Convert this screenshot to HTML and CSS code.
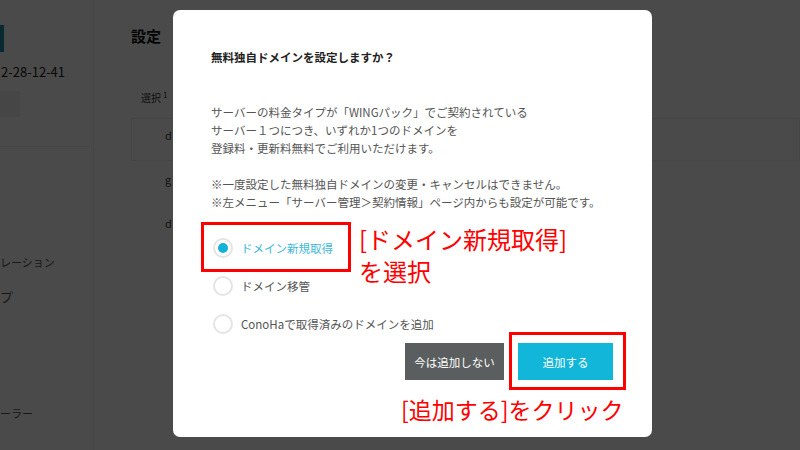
FILE: index.html
```html
<!DOCTYPE html>
<html lang="ja">
<head>
    <meta charset="UTF-8">
    <title>無料独自ドメイン設定</title>
    <link rel="stylesheet" href="styles.css">
</head>
<body>
    <div class="page">
        <aside class="sidebar">
            <div class="logo"></div>
            <div class="server-name">2-28-12-41</div>
            <div class="side-btn"></div>
            <nav class="side-menu">
                <div class="side-item item-migrate">レーション</div>
                <div class="side-item item-app">プ</div>
                <div class="side-item item-error">ーラー</div>
            </nav>
        </aside>

        <main class="content">
            <h2 class="content-title">設定</h2>
            <div class="table">
                <div class="table-head">選択<sup>1</sup></div>
                <div class="table-row selected">d</div>
                <div class="table-row">g</div>
                <div class="table-row">d</div>
            </div>
        </main>
    </div>

    <div class="overlay">
        <div class="modal">
            <h3 class="modal-title">無料独自ドメインを設定しますか？</h3>

            <p class="modal-text">
                サーバーの料金タイプが「WINGパック」でご契約されている<br>
                サーバー１つにつき、いずれか1つのドメインを<br>
                登録料・更新料無料でご利用いただけます。
            </p>
            <p class="modal-text">
                ※一度設定した無料独自ドメインの変更・キャンセルはできません。<br>
                ※左メニュー「サーバー管理＞契約情報」ページ内からも設定が可能です。
            </p>

            <div class="options">
                <label class="option checked"><span class="radio"></span>ドメイン新規取得</label>
                <label class="option"><span class="radio"></span>ドメイン移管</label>
                <label class="option"><span class="radio"></span>ConoHaで取得済みのドメインを追加</label>
            </div>

            <div class="modal-actions">
                <button class="btn btn-cancel">今は追加しない</button>
                <button class="btn btn-add">追加する</button>
            </div>

            <!-- annotations -->
            <div class="mark mark-option"></div>
            <div class="note note-option">[ドメイン新規取得]<br>を選択</div>
            <div class="mark mark-add"></div>
            <div class="note note-add">[追加する]をクリック</div>
        </div>
    </div>
</body>
</html>
```

FILE: styles.css
```css
* {
    margin: 0;
    padding: 0;
    box-sizing: border-box;
}

body {
    font-family: "Noto Sans CJK JP", sans-serif;
    background: #ffffff;
    color: #333;
    width: 800px;
    height: 450px;
    overflow: hidden;
    position: relative;
}

.page {
    display: flex;
    height: 450px;
}

/* sidebar (behind the dim layer) */
.sidebar {
    width: 94px;
    border-right: 1px solid #f0f0f0;
    display: flex;
    flex-direction: column;
}

.logo {
    width: 4px;
    height: 27px;
    margin-top: 25px;
    background: #1f8fa6;
}

.server-name {
    font-size: 13px;
    line-height: 18px;
    margin-top: 11px;
    padding-left: 1px;
    color: #222;
}

.side-btn {
    width: 20px;
    height: 26px;
    margin-top: 10px;
    background: #f2f2f2;
}

.side-menu {
    margin-top: 29px;
    border-top: 1px solid #f0f0f0;
    margin-right: 4px;
    flex: 1;
}

.side-item {
    font-size: 11px;
    line-height: 16px;
    color: #555;
}

.item-migrate {
    margin-top: 107px;
}

.item-app {
    margin-top: 19px;
    font-size: 13px;
}

.item-error {
    margin-top: 100px;
}

/* main content */
.content {
    flex: 1;
    padding: 26px 0 0 37px;
}

.content-title {
    font-size: 15px;
    line-height: 20px;
    font-weight: bold;
    color: #111;
}

.table {
    margin-top: 40px;
}

.table-head {
    font-size: 10px;
    line-height: 18px;
    padding-left: 10px;
    color: #333;
}

.table-head sup {
    font-size: 8px;
    margin-left: 2px;
}

.table-row {
    height: 44px;
    font-size: 11px;
    line-height: 36px;
    padding-left: 34px;
    color: #444;
}

.table-row.selected {
    margin-top: 11px;
    height: 43px;
    border: 1px solid #f2f2f2;
    line-height: 32px;
    padding-left: 33px;
}

/* dim layer + modal */
.overlay {
    position: absolute;
    inset: 0;
    background: rgba(0, 0, 0, 0.71);
    padding: 10px 0 0 173px;
}

.modal {
    position: relative;
    width: 479px;
    height: 427px;
    background: #fff;
    border-radius: 7px;
    padding: 38px 39px 0 38px;
}

.modal-title {
    font-size: 11.5px;
    line-height: 18px;
    font-weight: bold;
    color: #222;
    margin-bottom: 37px;
}

.modal-text {
    font-size: 11.5px;
    line-height: 18px;
    color: #555;
    margin-bottom: 18px;
}

.options {
    display: flex;
    flex-direction: column;
}

.option {
    display: flex;
    align-items: center;
    height: 38px;
    font-size: 11.5px;
    color: #555;
}

.radio {
    width: 20px;
    height: 20px;
    margin: 0 8px 0 2px;
    border: 2px solid #e4e4e4;
    border-radius: 50%;
    display: flex;
    align-items: center;
    justify-content: center;
}

.option.checked {
    color: #3db8da;
}

.option.checked .radio::after {
    content: "";
    width: 10px;
    height: 10px;
    border-radius: 50%;
    background: #15b2d8;
}

.modal-actions {
    display: flex;
    justify-content: flex-end;
    gap: 14px;
}

.btn {
    height: 37px;
    border: none;
    color: #fff;
    font-family: inherit;
    font-size: 11.5px;
}

.btn-cancel {
    width: 99px;
    background: #5a5e5e;
}

.btn-add {
    width: 95px;
    background: #12b6d8;
}

/* red annotations on top of the screenshot */
.mark {
    position: absolute;
    border: 3px solid #f00;
}

.mark-option {
    left: 28px;
    top: 212px;
    width: 150px;
    height: 50px;
}

.mark-add {
    left: 336px;
    top: 322px;
    width: 117px;
    height: 58px;
}

.note {
    position: absolute;
    color: #f00;
    white-space: nowrap;
}

.note-option {
    left: 186px;
    top: 213px;
    font-size: 24px;
    line-height: 32px;
}

.note-add {
    left: 228px;
    top: 384px;
    font-size: 23px;
    line-height: 30px;
}
```
